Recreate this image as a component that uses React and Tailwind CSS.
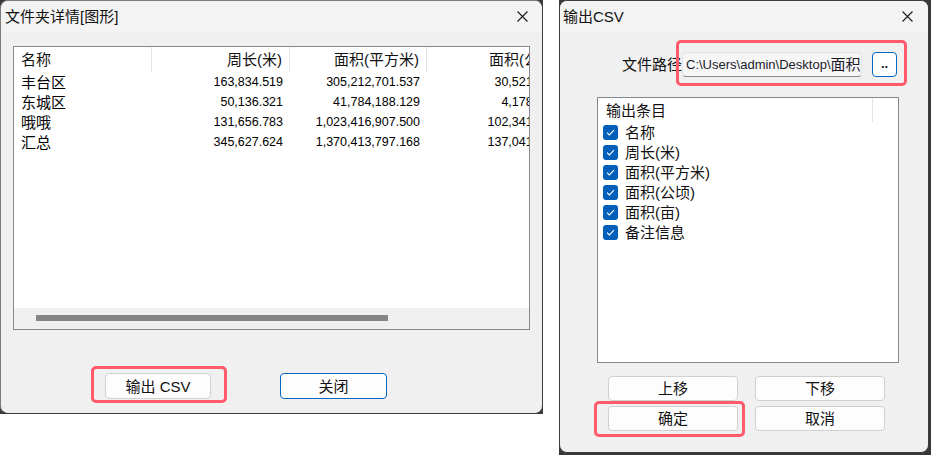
import React from "react";

const rows = [
  { name: "丰台区", len: "163,834.519", area: "305,212,701.537", ha: "30,521.270" },
  { name: "东城区", len: "50,136.321", area: "41,784,188.129", ha: "4,178.419" },
  { name: "哦哦", len: "131,656.783", area: "1,023,416,907.500", ha: "102,341.691" },
  { name: "汇总", len: "345,627.624", area: "1,370,413,797.168", ha: "137,041.380" },
];

const items = ["名称", "周长(米)", "面积(平方米)", "面积(公顷)", "面积(亩)", "备注信息"];

function CloseIcon() {
  return (
    <svg width="11" height="11" viewBox="0 0 11 11" className="shrink-0">
      <path d="M0.5 0.5 L10.5 10.5 M10.5 0.5 L0.5 10.5" stroke="#1a1a1a" strokeWidth="1.1" fill="none" />
    </svg>
  );
}

function Check() {
  return (
    <span className="w-[15px] h-[15px] rounded-[3px] bg-[#005fb8] flex items-center justify-center shrink-0">
      <svg width="15" height="15" viewBox="0 0 15 15">
        <polyline points="4,7.6 6.4,10 11,5.2" stroke="#ffffff" strokeWidth="1.1" fill="none" />
      </svg>
    </span>
  );
}

function Highlight({ className }) {
  return <span className={"absolute border-[3px] border-[#ff5b6b] rounded-[5px] pointer-events-none " + className}></span>;
}

function FolderDialog() {
  return (
    <div className="w-[543px] h-[414px] bg-[#3a3737] shrink-0">
      <div className="h-full rounded-[8px] border border-[#7c7c7c] border-r-[#3c3c3c] border-b-[#3c3c3c] bg-[#f0f0f0] flex flex-col overflow-hidden">
        <div className="h-[31px] bg-[#f3f3f3] flex items-center justify-between pl-[4px] pr-[14px]">
          <span className="text-[15px] leading-none text-[#111]">文件夹详情[图形]</span>
          <CloseIcon />
        </div>
        <div className="pl-[12px] pt-[14px]">
          <div className="w-[517px] h-[284px] border border-[#828790] bg-white flex flex-col overflow-hidden">
            <div className="h-[25px] flex text-[15px] leading-none text-[#111] shrink-0">
              <div className="w-[138px] shrink-0 flex items-center pl-[7px] border-r border-[#e5e5e5]">名称</div>
              <div className="w-[138px] shrink-0 flex items-center justify-end pr-[7px] border-r border-[#e5e5e5]">周长(米)</div>
              <div className="w-[137px] shrink-0 flex items-center justify-end pr-[7px] border-r border-[#e5e5e5]">面积(平方米)</div>
              <div className="w-[137px] shrink-0 flex items-center pl-[62px] whitespace-nowrap">面积(公顷)</div>
            </div>
            {rows.map((r, i) => (
              <div key={i} className="h-[20px] flex items-center leading-none text-black shrink-0">
                <div className="w-[138px] shrink-0 pl-[7px] text-[15px]">{r.name}</div>
                <div className="w-[138px] shrink-0 pr-[7px] text-right text-[12.5px]">{r.len}</div>
                <div className="w-[137px] shrink-0 pr-[7px] text-right text-[12.5px]">{r.area}</div>
                <div className="w-[137px] shrink-0 pr-[7px] text-right text-[12.5px] whitespace-nowrap">{r.ha}</div>
              </div>
            ))}
            <div className="flex-1"></div>
            <div className="h-[21px] bg-[#f0f0f0] pl-[22px] pt-[7px] shrink-0">
              <div className="w-[352px] h-[6px] bg-[#858585]"></div>
            </div>
          </div>
        </div>
        <div className="flex mt-[43px] pl-[104px] gap-[69px]">
          <div className="relative">
            <button className="w-[106px] h-[26px] bg-[#fdfdfd] border border-[#d0d0d0] rounded-[4px] text-[15px] leading-none text-[#111]">
              输出 CSV
            </button>
            <Highlight className="-left-[14px] -right-[16px] -top-[7px] -bottom-[4px]" />
          </div>
          <button className="w-[107px] h-[26px] bg-[#fdfdfd] border border-[#0067c0] rounded-[4px] text-[15px] leading-none text-[#111]">
            关闭
          </button>
        </div>
      </div>
    </div>
  );
}

function CsvDialog() {
  return (
    <div className="w-[372px] h-[455px] bg-[#3a3737] shrink-0">
      <div className="w-[370px] h-[453px] rounded-[8px] border border-[#3c3c3c] bg-[#f0f0f0] flex flex-col overflow-hidden">
        <div className="h-[31px] bg-[#f3f3f3] flex items-center justify-between pl-[3px] pr-[15px]">
          <span className="text-[15px] leading-none text-[#111]">输出CSV</span>
          <CloseIcon />
        </div>
        <div className="flex items-center mt-[20px] pl-[62px] h-[25px]">
          <span className="w-[60px] text-[15px] leading-none text-[#111] whitespace-nowrap">文件路径</span>
          <div className="relative flex gap-[10px]">
            <div className="w-[180px] h-[25px] bg-[#f6f6f6] border border-[#e2e2e2] border-b-[#8a8a8a] rounded-[4px] flex items-center pl-[3px] overflow-hidden whitespace-nowrap text-[13px] leading-none text-[#1b1b2b]">
              C:\Users\admin\Desktop\<span className="text-[15px]">面积(平方米)</span>
            </div>
            <button className="w-[25px] h-[25px] bg-white border border-[#0067c0] rounded-[4px] text-[13px] leading-none font-bold text-[#111] pb-[2px]">
              ..
            </button>
            <Highlight className="-left-[6px] -right-[10px] -top-[12px] -bottom-[9px]" />
          </div>
        </div>
        <div className="ml-[37px] mt-[20px] w-[302px] h-[266px] border border-[#828790] bg-white">
          <div className="h-[24px] flex text-[15px] leading-none text-[#111]">
            <div className="w-[275px] flex items-center pl-[8px] border-r border-[#e5e5e5]">输出条目</div>
          </div>
          {items.map((it) => (
            <div key={it} className="h-[20px] flex items-center pl-[5px] gap-[7px] text-[15px] leading-none text-[#111]">
              <Check />
              <span>{it}</span>
            </div>
          ))}
        </div>
        <div className="ml-[48px] mt-[13px] grid grid-cols-[130px_130px] gap-x-[17px] gap-y-[5px]">
          <button className="h-[25px] bg-[#fdfdfd] border border-[#d0d0d0] rounded-[4px] text-[15px] leading-none text-[#111]">上移</button>
          <button className="h-[25px] bg-[#fdfdfd] border border-[#d0d0d0] rounded-[4px] text-[15px] leading-none text-[#111]">下移</button>
          <div className="relative">
            <button className="w-full h-[25px] bg-[#fdfdfd] border border-[#d0d0d0] rounded-[4px] text-[15px] leading-none text-[#111]">确定</button>
            <Highlight className="-left-[14px] -right-[7px] -top-[5px] -bottom-[6px]" />
          </div>
          <button className="h-[25px] bg-[#fdfdfd] border border-[#d0d0d0] rounded-[4px] text-[15px] leading-none text-[#111]">取消</button>
        </div>
      </div>
    </div>
  );
}

export default function App() {
  return (
    <div className="w-[931px] h-[455px] bg-white flex items-start gap-[16px] overflow-hidden font-['Liberation_Sans','Noto_Sans_CJK_SC',sans-serif]">
      <FolderDialog />
      <CsvDialog />
    </div>
  );
}
